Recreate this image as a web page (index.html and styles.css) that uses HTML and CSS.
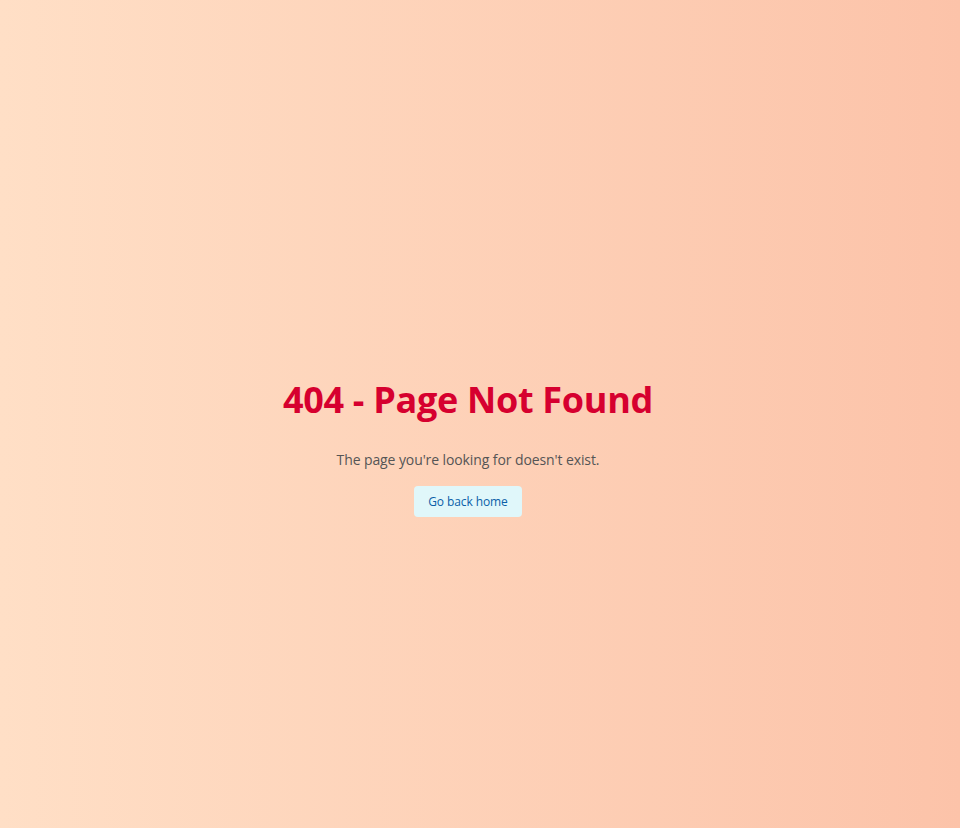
FILE: index.html
```
<!DOCTYPE html>
<html lang="en">
<head>
<meta charset="utf-8">
<title>404 - Page Not Found</title>
<link rel="stylesheet" href="styles.css">
</head>
<body>
<main class="page">
  <div class="content">
    <h1 class="title">404 - Page Not Found</h1>
    <p class="message">The page you're looking for doesn't exist.</p>
    <a class="home-btn" href="#">Go back home</a>
  </div>
</main>
</body>
</html>
```
FILE: styles.css
```
html, body {
  margin: 0;
  padding: 0;
  height: 100%;
}
body {
  background: linear-gradient(90deg, #ffdfc6 0%, #fcc3a9 100%);
  font-family: "Open Sans", "Noto Sans", sans-serif;
}
.page {
  min-height: 100vh;
  box-sizing: border-box;
  display: flex;
  align-items: center;
  justify-content: center;
  padding-right: 24px;
  padding-top: 66px;
}
.content {
  display: flex;
  flex-direction: column;
  align-items: center;
  text-align: center;
}
.title {
  margin: 0;
  font-size: 36px;
  font-weight: 700;
  color: #d6002f;
  line-height: 44px;
  letter-spacing: -0.3px;
}
.message {
  margin: 28px 0 0;
  font-size: 14px;
  color: #555;
  line-height: 20px;
  letter-spacing: -0.1px;
}
.home-btn {
  margin-top: 16px;
  display: inline-block;
  padding: 7px 14px;
  background: #e0f7fa;
  color: #0a5fa8;
  border-radius: 4px;
  font-size: 12px;
  line-height: 17px;
  text-decoration: none;
  letter-spacing: -0.1px;
}
```
